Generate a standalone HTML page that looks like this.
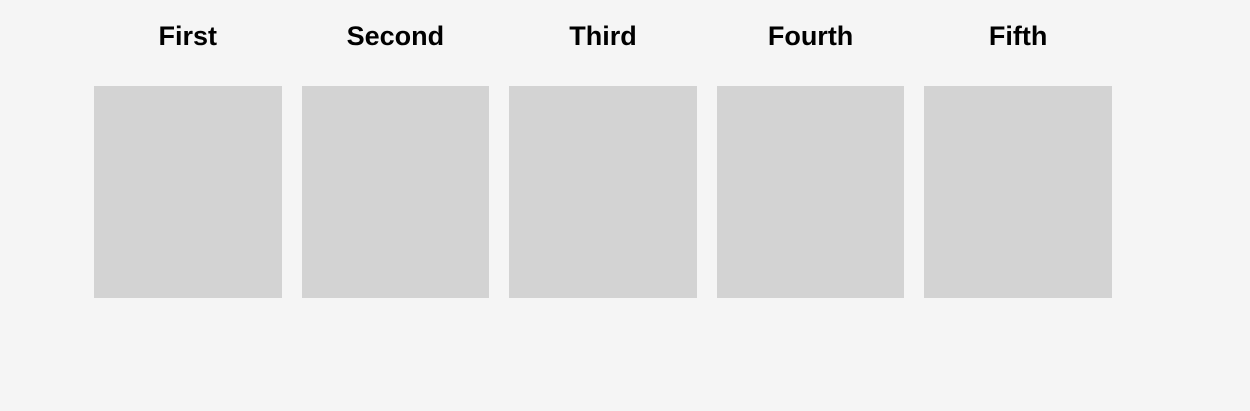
<!DOCTYPE html>
<html><head><style>
body{margin:0;background:#f5f5f5;width:1250px;height:411px;overflow:hidden;font-family:"Liberation Sans",sans-serif}
.row{position:absolute;left:94px;top:0;display:flex;gap:20px}
.col{width:187.6px}
h2{margin:0;height:86px;line-height:72px;text-align:center;font-size:27px;font-weight:bold;color:#000}
.box{height:212px;background:#d3d3d3}
</style></head><body>
<div class="row">
<div class="col"><h2>First</h2><div class="box"></div></div>
<div class="col"><h2>Second</h2><div class="box"></div></div>
<div class="col"><h2>Third</h2><div class="box"></div></div>
<div class="col"><h2>Fourth</h2><div class="box"></div></div>
<div class="col"><h2>Fifth</h2><div class="box"></div></div>
</div>
</body></html>
